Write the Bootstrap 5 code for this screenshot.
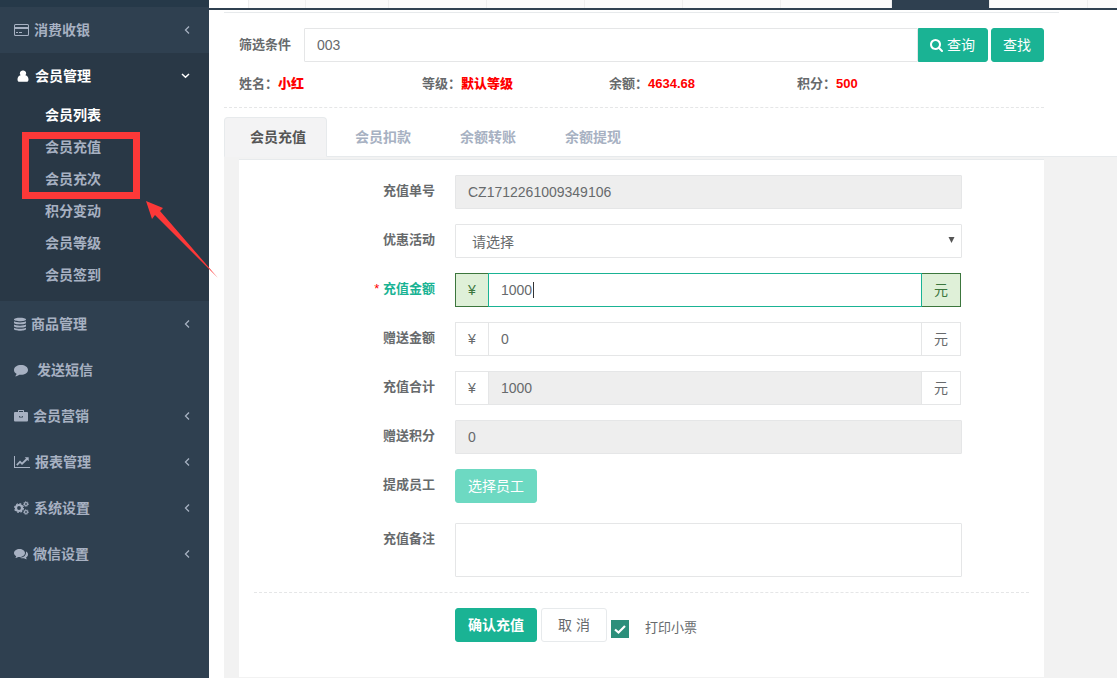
<!DOCTYPE html>
<html lang="zh-CN">
<head>
<meta charset="utf-8">
<meta name="viewport" content="width=device-width, initial-scale=1">
<title>会员充值</title>
<link href="https://cdn.jsdelivr.net/npm/bootstrap@5.3.0/dist/css/bootstrap.min.css" rel="stylesheet">
<style>
:root{--navy:#2f4050;--navy-dark:#293846;--muted:#a7b1c2;--ink:#676a6c;--green:#1ab394;--line:#e5e6e7;--mark-red:#fc3838}
body{font-family:"Liberation Sans","Noto Sans CJK SC",sans-serif;font-size:13px;line-height:20px;color:var(--ink);background:#fff}
/* sidebar */
.side{width:209px;background:var(--navy)}
.side-top{height:7px;background:#263949}
.side a{color:var(--muted);font-weight:700;font-size:14px;text-decoration:none}
.side-link{height:46px;padding:0 19px 0 14px;gap:5px}
.side-link svg{fill:currentColor;flex:none}
.side .opened{background:var(--navy-dark)}
.side .opened>.side-link,.side .sub-link.current{color:#fff}
.side .opened>.side-link{padding-left:16px}
.sub-menu{padding-bottom:10px}
.sub-link{height:32px;padding-left:45px}
.frame-mark{left:22px;top:132px;width:118px;height:67px;border:7px solid var(--mark-red)}
.arrow-mark{left:145px;top:200px;z-index:5}
/* page tabs */
.strip{height:10px;border-bottom:2px solid var(--navy);background:#fafafa}
.strip span{border-right:1px solid #eee;flex:none}
.strip .w-start{width:40px;background:#fff}
.strip .w-home{width:57px}
.strip .w-mid{width:83px}
.strip .w-std{width:98px}
.strip .w-long{width:111px}
.strip .on{background:var(--navy)}
/* search */
.top-rule{height:1px;margin:2px 58px 15px 15px;background:#e7eaec}
.search-area{margin:0 73px 0 15px;padding-bottom:13px;border-bottom:1px dashed var(--line)}
.search-row{padding-left:15px}
.search-row label{margin-right:13px}
.find-btn{margin-left:3px}
label,.lbl{font-weight:700}
.form-control,.form-select{height:34px;font-size:14px;line-height:20px;color:var(--ink);border-color:var(--line);border-radius:1px;padding:6px 12px}
.form-control:focus{box-shadow:none;color:var(--ink)}
.form-control[readonly]{background:#eee}
.btn{height:34px;font-size:14px;line-height:20px;padding:6px 12px;border-radius:3px}
.btn-green,.btn-green:hover,.btn-green:disabled{background:var(--green);border-color:var(--green);color:#fff}
.btn-green:disabled{background:#6dd9c2;border-color:#6dd9c2;opacity:1}
.btn-plain{border-color:#e7eaec;background:#fff;color:var(--ink);padding:6px 16px}
.search-row .btn{padding:6px 12px 6px 11px}
.facts{display:grid;grid-template-columns:183fr 187fr 188fr 247fr;padding:12px 0 0 15px;font-weight:700}
.facts b{color:#f00}
.facts span{font-family:"Noto Sans CJK TC",sans-serif;line-height:1}
/* form tabs */
.nav-tabs{margin:9px 0 0 15px;border-color:#e7eaec;gap:2px}
.nav-tabs .nav-link{font-size:14px;line-height:20px;font-weight:700;color:var(--muted);padding:9px 20px 9px 25px;border-radius:4px 4px 0 0;border-color:transparent}
.nav-tabs .nav-link.active{color:#555;background:#f3f3f4;border-color:#e7eaec #e7eaec #f3f3f4}
.tab-body{margin-left:15px;padding:2px 73px 1px 15px;background:#f2f2f2}
.panel{background:#fff;border-top:1px solid #e7eaec;padding:15px 0 35px}
.form-line{display:grid;grid-template-columns:196px minmax(0,1fr);column-gap:20px;padding-right:82px;margin-bottom:15px}
.form-line>label,.form-line>.lbl{text-align:right;padding-top:6px}
.form-line .input-group{padding-right:1px}
.form-line textarea.form-control{height:54px;resize:none}
.form-select{padding:7px 30px 5px 16px;background-position:right 6px top 12px;background-size:7px 7px;background-image:url("data:image/svg+xml,%3Csvg xmlns='http://www.w3.org/2000/svg' viewBox='0 0 7 7'%3E%3Cpath d='M.500 0h6L3.500 6z' fill='%23555'/%3E%3C/svg%3E")}
.input-group-text{font-size:14px;line-height:20px;color:var(--ink);background:#fff;border-color:var(--line);border-radius:0;padding:6px 12px;justify-content:center}
.input-group-text:last-child{width:40px}
.input-group-text:first-child{width:34px}
.valid-line label{color:var(--green)}
.valid-line label i{color:#f00;font-weight:400;font-style:normal}
.valid-line .form-control,.valid-line .form-control:focus{border-color:var(--green);caret-color:transparent;background:linear-gradient(#333,#333) 44px 8px/1px 16px no-repeat #fff}
.valid-line .input-group-text{color:#3c763d;background:#dff0d8;border-color:#3c763d}
.form-rule{margin:0 15px 15px;border-bottom:1px dashed var(--line)}
.form-check-input.print-box{width:18px;height:18px;margin:0;border-radius:0;border:0}
.print-box:checked{background-color:#2c8f7b;background-image:url("data:image/svg+xml,%3Csvg xmlns='http://www.w3.org/2000/svg' viewBox='0 0 18 18'%3E%3Cpath d='M4 9.500l3.500 3L14 6' fill='none' stroke='white' stroke-width='2.200'/%3E%3C/svg%3E")}
</style>
</head>
<body>
<div class="d-flex min-vh-100 position-relative">
<nav class="side flex-shrink-0">
  <div class="side-top"></div>
  <a href="#" class="side-link d-flex align-items-center"><svg width="15" height="14" viewBox="0 0 15 14"><path fill-rule="evenodd" d="M1.500 1h12A1.500 1.500 0 0 1 15 2.500v9a1.500 1.500 0 0 1-1.500 1.500h-12A1.500 1.500 0 0 1 0 11.500v-9A1.500 1.500 0 0 1 1.500 1zM1 4h13V2.500l-.5-.5h-12l-.5.500zm0 2v5.500l.5.500h12l.5-.5V6zm1 3h2v1H2zm3 0h3v1H5z"/></svg><span class="flex-fill">消费收银</span><svg width="6" height="10" viewBox="0 0 6 10"><path d="M5 1.500L1.500 5 5 8.500" fill="none" stroke="currentColor" stroke-width="1.300"/></svg></a>
  <div class="opened">
    <a href="#" class="side-link d-flex align-items-center"><svg width="14" height="14" viewBox="0 0 14 14"><path d="M7 1.500a2.800 2.800 0 0 1 2.400 4.700c2.100.3 3.100 2 3.100 4.300 0 1.500-.8 2.300-1.800 2.300H3.300c-1 0-1.800-.8-1.800-2.300 0-2.300 1-4 3.100-4.300A2.800 2.800 0 0 1 7 1.500z"/></svg><span class="flex-fill">会员管理</span><svg width="9" height="6" viewBox="0 0 9 6"><path d="M1 1l3.500 3.300L8 1" fill="none" stroke="currentColor" stroke-width="1.500"/></svg></a>
    <div class="sub-menu">
      <a href="#" class="sub-link current d-flex align-items-center">会员列表</a>
      <a href="#" class="sub-link d-flex align-items-center">会员充值</a>
      <a href="#" class="sub-link d-flex align-items-center">会员充次</a>
      <a href="#" class="sub-link d-flex align-items-center">积分变动</a>
      <a href="#" class="sub-link d-flex align-items-center">会员等级</a>
      <a href="#" class="sub-link d-flex align-items-center">会员签到</a>
    </div>
  </div>
  <a href="#" class="side-link d-flex align-items-center"><svg width="12" height="14" viewBox="0 0 12 14"><path d="M0 2.500C0 .2 12 .2 12 2.500S0 4.800 0 2.500zM0 4.300c2 1.500 10 1.500 12 0v1.400C12 7.900 0 7.900 0 5.700zm0 3.200c2 1.500 10 1.500 12 0v1.400c0 2.200-12 2.200-12 0zm0 3.200c2 1.500 10 1.500 12 0V12c0 2.300-12 2.300-12 0z"/></svg><span class="flex-fill">商品管理</span><svg width="6" height="10" viewBox="0 0 6 10"><path d="M5 1.500L1.500 5 5 8.500" fill="none" stroke="currentColor" stroke-width="1.300"/></svg></a>
  <a href="#" class="side-link d-flex align-items-center"><svg width="14" height="14" viewBox="0 0 14 14"><path d="M7 2c3.900 0 7 2.100 7 4.900s-3.100 4.900-7 4.900l-1.600-.1C4.300 12.600 2.800 13.200 1 13.300c.8-.8 1.400-1.500 1.500-2.600C.9 9.800 0 8.500 0 6.900 0 4.100 3.100 2 7 2z"/></svg><span class="ps-1 flex-fill">发送短信</span></a>
  <a href="#" class="side-link d-flex align-items-center"><svg width="14" height="14" viewBox="0 0 14 14"><path fill-rule="evenodd" d="M4 3V1.500L4.500 1h5l.5.500V3h3a1 1 0 0 1 1 1v7.500a1 1 0 0 1-1 1H1a1 1 0 0 1-1-1V4a1 1 0 0 1 1-1zm1 0h4V2H5zm.2 4v1.500h3.600V7H8v.8H6V7z"/></svg><span class="flex-fill">会员营销</span><svg width="6" height="10" viewBox="0 0 6 10"><path d="M5 1.500L1.500 5 5 8.500" fill="none" stroke="currentColor" stroke-width="1.300"/></svg></a>
  <a href="#" class="side-link d-flex align-items-center"><svg width="16" height="14" viewBox="0 0 16 14"><path d="M0 1h1v11h15v1H0zM2.200 9.500L6 5.500l2 2 4-4L10.700 2.200h4v4L13.300 5 8 10 6 8l-2.600 2.700z"/></svg><span class="flex-fill">报表管理</span><svg width="6" height="10" viewBox="0 0 6 10"><path d="M5 1.500L1.500 5 5 8.500" fill="none" stroke="currentColor" stroke-width="1.300"/></svg></a>
  <a href="#" class="side-link d-flex align-items-center"><svg width="15" height="14" viewBox="0 0 15 14"><g fill="none" stroke="currentColor"><circle cx="5" cy="7" r="3" stroke-width="2.200"/><circle cx="5" cy="7" r="4.400" stroke-width="1.200" stroke-dasharray="1.800 1.650"/><circle cx="12" cy="3" r="1.500" stroke-width="1.200"/><circle cx="12" cy="3" r="2.400" stroke-width=".9" stroke-dasharray="1 .88"/><circle cx="12" cy="11" r="1.500" stroke-width="1.200"/><circle cx="12" cy="11" r="2.400" stroke-width=".9" stroke-dasharray="1 .88"/></g></svg><span class="flex-fill">系统设置</span><svg width="6" height="10" viewBox="0 0 6 10"><path d="M5 1.500L1.500 5 5 8.500" fill="none" stroke="currentColor" stroke-width="1.300"/></svg></a>
  <a href="#" class="side-link d-flex align-items-center"><svg width="14" height="14" viewBox="0 0 14 14"><path d="M5.500 2C8.500 2 11 3.700 11 6s-2.500 4-5.500 4l-1.300-.1c-.9.600-1.900 1-3 1 .5-.5.9-1 1-1.700C.8 8.400 0 7.300 0 6c0-2.300 2.500-4 5.500-4zM12 4.500c1.300.7 2 1.700 2 2.900 0 1.300-.8 2.300-2 3 .1.800.5 1.300 1 1.800-1.100 0-2.200-.4-3-1-1.500.2-3 0-4.100-.5 3.500 0 6.500-1.900 6.100-6.200z"/></svg><span class="flex-fill">微信设置</span><svg width="6" height="10" viewBox="0 0 6 10"><path d="M5 1.500L1.500 5 5 8.500" fill="none" stroke="currentColor" stroke-width="1.300"/></svg></a>
</nav>

<main class="flex-fill overflow-hidden">
  <div class="strip d-flex overflow-hidden"><span class="w-start"></span><span class="w-home"></span><span class="w-mid"></span><span class="w-std"></span><span class="w-std"></span><span class="w-std"></span><span class="w-std"></span><span class="w-long"></span><span class="w-std on"></span><span class="w-std"></span></div>
  <div class="top-rule"></div>
  <form>
  <section class="search-area">
    <div class="search-row d-flex align-items-center">
      <label for="filter" class="flex-shrink-0">筛选条件</label>
      <input id="filter" class="form-control flex-fill" value="003">
      <button type="button" class="btn btn-green flex-shrink-0 rounded-start-0 d-flex align-items-center"><svg class="me-1" width="13" height="14" viewBox="0 0 1664 1792" fill="currentColor"><path d="M1152 832q0-185-131.500-316.500t-316.500-131.500-316.500 131.500-131.500 316.500 131.500 316.500 316.500 131.500 316.500-131.500 131.500-316.500zm512 832q0 52-38 90t-90 38q-54 0-90-38l-343-342q-179 124-399 124-143 0-273.500-55.500t-225-150-150-225-55.500-273.500 55.500-273.500 150-225 225-150 273.500-55.500 273.500 55.500 225 150 150 225 55.500 273.500q0 220-124 399l343 343q37 37 37 90z"/></svg>查询</button>
      <button type="button" class="btn btn-green flex-shrink-0 find-btn">查找</button>
    </div>
    <div class="facts"><div>姓名<span>：</span><b>小红</b></div><div>等级<span>：</span><b>默认等级</b></div><div>余额<span>：</span><b>4634.68</b></div><div>积分<span>：</span><b>500</b></div></div>
  </section>
  <ul class="nav nav-tabs">
    <li class="nav-item"><a class="nav-link active" href="#">会员充值</a></li>
    <li class="nav-item"><a class="nav-link" href="#">会员扣款</a></li>
    <li class="nav-item"><a class="nav-link" href="#">余额转账</a></li>
    <li class="nav-item"><a class="nav-link" href="#">余额提现</a></li>
  </ul>
  <div class="tab-body">
    <div class="panel">
      <div class="form-line"><label for="orderNo">充值单号</label><input id="orderNo" class="form-control" value="CZ1712261009349106" readonly></div>
      <div class="form-line"><label for="promo">优惠活动</label><select id="promo" class="form-select"><option>请选择</option></select></div>
      <div class="form-line valid-line"><label for="amount"><i>*</i> 充值金额</label><div class="input-group flex-nowrap"><span class="input-group-text">¥</span><input id="amount" class="form-control" value="1000" autofocus><span class="input-group-text">元</span></div></div>
      <div class="form-line"><label for="gift">赠送金额</label><div class="input-group flex-nowrap"><span class="input-group-text">¥</span><input id="gift" class="form-control" value="0"><span class="input-group-text">元</span></div></div>
      <div class="form-line"><label for="total">充值合计</label><div class="input-group flex-nowrap"><span class="input-group-text">¥</span><input id="total" class="form-control" value="1000" readonly><span class="input-group-text">元</span></div></div>
      <div class="form-line"><label for="points">赠送积分</label><input id="points" class="form-control" value="0" readonly></div>
      <div class="form-line mb-3"><span class="lbl">提成员工</span><div><button type="button" class="btn btn-green" disabled>选择员工</button></div></div>
      <div class="form-line pt-1"><label for="note">充值备注</label><textarea id="note" class="form-control"></textarea></div>
      <div class="form-rule"></div>
      <div class="form-line mb-0"><span></span><div class="d-flex gap-1"><button type="submit" class="btn btn-green fw-bold">确认充值</button><button type="button" class="btn btn-plain">取 消</button><div class="d-flex align-items-end pb-1"><input type="checkbox" class="form-check-input print-box" id="print" checked><label for="print" class="fw-normal ms-3">打印小票</label></div></div></div>
    </div>
  </div>
  </form>
</main>
<div class="frame-mark position-absolute"></div>
<svg class="arrow-mark position-absolute" width="75" height="80" viewBox="0 0 75 80"><path d="M1 1L18 8l-3 3 58 67L10 15l-3 4z" fill="#fc3838"/></svg>
</div>
<script src="https://cdn.jsdelivr.net/npm/bootstrap@5.3.0/dist/js/bootstrap.bundle.min.js"></script>
</body>
</html>
